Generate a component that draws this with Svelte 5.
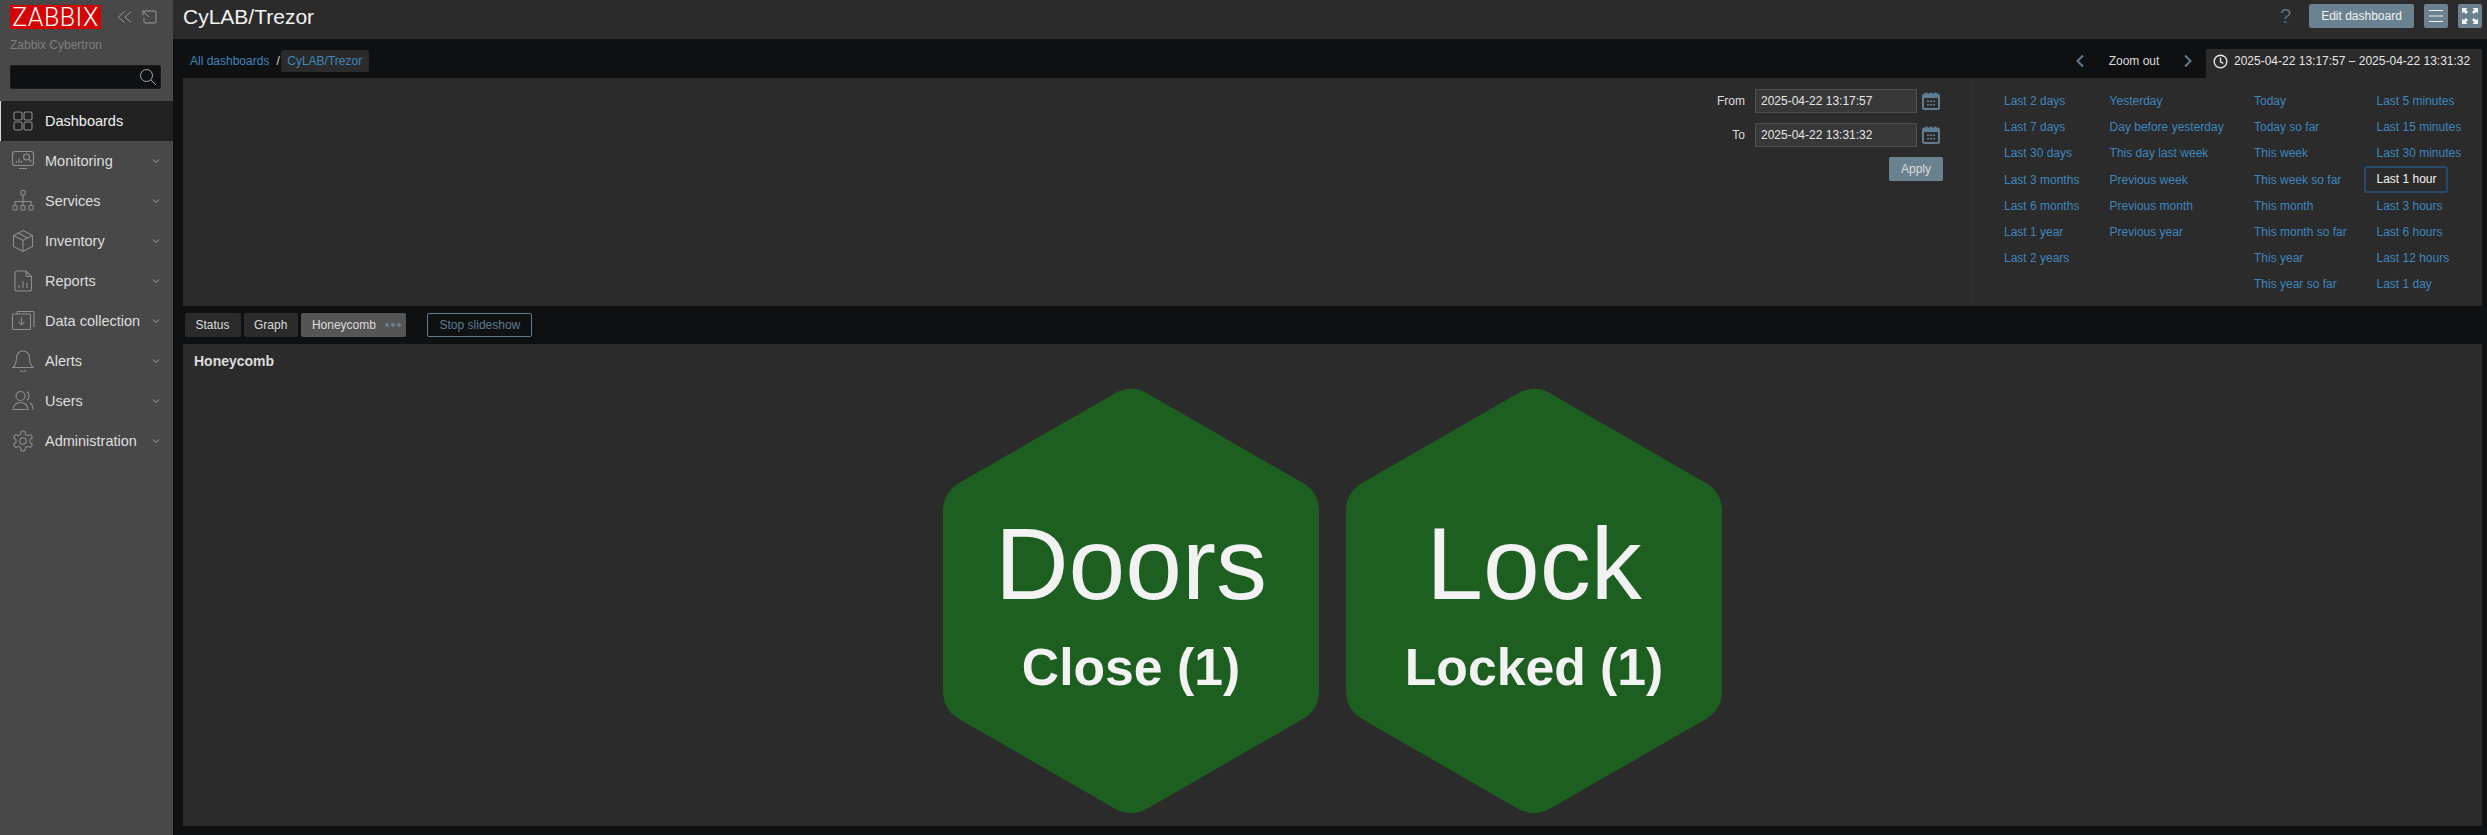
<script>
  const nav = [
    { label: 'Dashboards', active: true, icon: '<rect x="3" y="3" width="8" height="8" rx="1.5"/><rect x="13" y="3" width="8" height="8" rx="1.5"/><rect x="3" y="13" width="8" height="8" rx="1.5"/><rect x="13" y="13" width="8" height="8" rx="1.5"/>' },
    { label: 'Monitoring', icon: '<rect x="1.5" y="2.5" width="21" height="14" rx="2.5"/><path d="M8 19.5h8M5.5 12v2M8 9.5V14M10.5 11.5V14"/><circle cx="15.5" cy="8" r="3"/><path d="M17.8 10.2L20.5 13"/>' },
    { label: 'Services', icon: '<rect x="10" y="1.5" width="4" height="4.5" rx=".8"/><path d="M12 6v10M4 16v-3.5h16V16"/><rect x="2" y="16.5" width="4" height="4.5" rx=".8"/><rect x="10" y="16.5" width="4" height="4.5" rx=".8"/><rect x="18" y="16.5" width="4" height="4.5" rx=".8"/>' },
    { label: 'Inventory', icon: '<path d="M12 1.5L21.5 6.5V17.5L12 22.5L2.5 17.5V6.5Z"/><path d="M2.5 6.5L12 11.5L21.5 6.5M12 11.5V22.5M7 4L16.5 9"/>' },
    { label: 'Reports', icon: '<path d="M6 2h9l5.5 5.5V20a2 2 0 0 1-2 2H6a2 2 0 0 1-2-2V4a2 2 0 0 1 2-2Z"/><path d="M15 2v3.5a2 2 0 0 0 2 2h3.5M8 16v3M12 12v7M16 14v5"/>' },
    { label: 'Data collection', icon: '<rect x="1.5" y="5" width="18" height="15.5" rx="1"/><path d="M6 5V3.500a1 1 0 0 1 1-1h15a1 1 0 0 1 1 1V18M10.500 8.500V15.500M7.500 12.800l3 3 3-3"/>' },
    { label: 'Alerts', icon: '<path d="M12 2a6.500 6.500 0 0 0-6.500 6.500c0 5.500-1.500 8-3.500 10h20c-2-2-3.500-4.500-3.500-10A6.500 6.500 0 0 0 12 2Z"/><path d="M9 21.500c1.500 1 4.500 1 6 0"/>' },
    { label: 'Users', icon: '<circle cx="9.500" cy="7" r="4.500"/><path d="M2 20.500c0-4 3-7 7.500-7s7.500 3 7.500 7ZM16 2.800c2.500 1 2.500 7 0 8.500M19 14c2 1 3 3.500 3 6.500"/>' },
    { label: 'Administration', icon: '<path d="M12.220 2h-.440a2 2 0 0 0-2 2v.180a2 2 0 0 1-1 1.730l-.430.250a2 2 0 0 1-2 0l-.150-.080a2 2 0 0 0-2.730.730l-.220.380a2 2 0 0 0 .730 2.730l.150.100a2 2 0 0 1 1 1.720v.510a2 2 0 0 1-1 1.740l-.150.090a2 2 0 0 0-.730 2.730l.220.380a2 2 0 0 0 2.730.730l.150-.080a2 2 0 0 1 2 0l.430.250a2 2 0 0 1 1 1.730V20a2 2 0 0 0 2 2h.440a2 2 0 0 0 2-2v-.180a2 2 0 0 1 1-1.730l.430-.250a2 2 0 0 1 2 0l.150.080a2 2 0 0 0 2.730-.730l.220-.390a2 2 0 0 0-.730-2.730l-.150-.080a2 2 0 0 1-1-1.740v-.500a2 2 0 0 1 1-1.740l.150-.090a2 2 0 0 0 .730-2.730l-.220-.380a2 2 0 0 0-2.730-.730l-.150.080a2 2 0 0 1-2 0l-.430-.250a2 2 0 0 1-1-1.730V4a2 2 0 0 0-2-2z"/><circle cx="12" cy="12" r="3.200"/>' }
  ]

  const ranges = [
    ['Last 2 days', 'Last 7 days', 'Last 30 days', 'Last 3 months', 'Last 6 months', 'Last 1 year', 'Last 2 years'],
    ['Yesterday', 'Day before yesterday', 'This day last week', 'Previous week', 'Previous month', 'Previous year'],
    ['Today', 'Today so far', 'This week', 'This week so far', 'This month', 'This month so far', 'This year', 'This year so far'],
    ['Last 5 minutes', 'Last 15 minutes', 'Last 30 minutes', 'Last 1 hour', 'Last 3 hours', 'Last 6 hours', 'Last 12 hours', 'Last 1 day']
  ]

  const fields = [
    { label: 'From', value: '2025-04-22 13:17:57' },
    { label: 'To', value: '2025-04-22 13:31:32' }
  ]

  const cells = [
    { name: 'Doors', value: 'Close (1)' },
    { name: 'Lock', value: 'Locked (1)' }
  ]
</script>

<div class="page">
  <aside class="sidebar">
    <div class="brand">
      <div class="logo">ZABBIX</div>
      <div class="brand-tools">
        <svg width="16" height="16" viewBox="0 0 16 16"><path d="M7.500 2.500L1.500 8l6 5.500M14 2.500L8 8l6 5.500" /></svg>
        <svg width="16" height="16" viewBox="0 0 16 16"><path d="M6 2h8a1 1 0 0 1 1 1v10a1 1 0 0 1-1 1H4a1 1 0 0 1-1-1V9M2 2l6 6M2 6V2h4" /></svg>
      </div>
    </div>
    <div class="server">Zabbix Cybertron</div>
    <div class="search">
      <svg width="18" height="18" viewBox="0 0 18 18"><circle cx="7.500" cy="7.500" r="6" /><path d="M12 12l5 5" /></svg>
    </div>
    <nav class="menu">
      {#each nav as item}
        <div class="menu-item" class:active={item.active}>
          <svg class="menu-icon" width="24" height="24" viewBox="0 0 24 24">{@html item.icon}</svg>
          <span class="menu-label">{item.label}</span>
          {#if !item.active}
            <svg class="chev" width="8" height="6" viewBox="0 0 8 6"><path d="M1 1.500l3 3 3-3" /></svg>
          {/if}
        </div>
      {/each}
    </nav>
  </aside>

  <main class="main">
    <header class="topbar">
      <h1>CyLAB/Trezor</h1>
      <div class="actions">
        <span class="help">?</span>
        <button class="btn edit">Edit dashboard</button>
        <button class="btn square" aria-label="Menu">
          <svg width="16" height="14" viewBox="0 0 16 14"><path d="M1 1.500h14M1 7h14M1 12.500h14" /></svg>
        </button>
        <button class="btn square" aria-label="Fullscreen">
          <svg width="18" height="18" viewBox="0 0 18 18"><path class="solid" d="M1 1h5.500L4.800 2.700 7 5 5 7 2.700 4.800 1 6.500ZM17 1v5.500l-1.700-1.700L13 7l-2-2 2.200-2.300L11.500 1ZM1 17v-5.500l1.700 1.700L5 11l2 2-2.200 2.300L6.500 17ZM17 17h-5.500l1.700-1.700L11 13l2-2 2.300 2.200 1.700-1.700Z" /></svg>
        </button>
      </div>
    </header>

    <div class="crumbs">
      <div class="crumb-list">
        <span class="link">All dashboards</span>
        <span class="sep">/</span>
        <span class="link chip">CyLAB/Trezor</span>
      </div>
      <div class="time-nav">
        <svg class="arrow" width="10" height="14" viewBox="0 0 10 14"><path d="M8 1.500L2.500 7 8 12.500" /></svg>
        <span class="zoom-out">Zoom out</span>
        <svg class="arrow" width="10" height="14" viewBox="0 0 10 14"><path d="M2 1.500L7.500 7 2 12.500" /></svg>
      </div>
      <div class="time-tab">
        <svg width="15" height="15" viewBox="0 0 15 15"><circle cx="7.500" cy="7.500" r="6.300" /><path d="M7.500 3.500v4.300l2.800 1.500" /></svg>
        <span>2025-04-22 13:17:57 – 2025-04-22 13:31:32</span>
      </div>
    </div>

    <section class="filter">
      <div class="time-form">
        {#each fields as field}
          <div class="field">
            <span class="field-label">{field.label}</span>
            <div class="input">{field.value}</div>
            <svg class="calendar" width="18" height="18" viewBox="0 0 18 18">
              <rect x="1" y="2.500" width="16" height="14.500" rx="1.500" />
              <path class="band" d="M1 3h16v3H1z" />
              <path d="M4.500 .500v3M9 .500v3M13.500 .500v3" />
              <path class="dots" d="M5 8.500h2v1.500H5zM8 8.500h2v1.500H8zM11 8.500h2v1.500h-2zM5 12h2v1.500H5zM8 12h2v1.500H8zM11 12h2v1.500h-2z" />
            </svg>
          </div>
        {/each}
        <button class="btn apply">Apply</button>
      </div>
      <div class="ranges">
        {#each ranges as column, i}
          <ul class="range-col" style="width: {[105.6, 144.4, 122.5, 105.5][i]}px">
            {#each column as range}
              <li><span class="link" class:selected={range === 'Last 1 hour'}>{range}</span></li>
            {/each}
          </ul>
        {/each}
      </div>
    </section>

    <div class="tabs">
      <button class="tab">Status</button>
      <button class="tab">Graph</button>
      <button class="tab current">Honeycomb <i class="dots-more"><b></b><b></b><b></b></i></button>
      <button class="stop">Stop slideshow</button>
    </div>

    <section class="widget">
      <div class="widget-title">Honeycomb</div>
      <div class="honeycomb">
        {#each cells as cell}
          <div class="cell">
            <svg class="hex" width="376" height="424" viewBox="0 0 376 424"><path d="M172 4.200Q188 -4.500 204 4.200L360 94Q376 103.500 376 122L376 302Q376 320.500 360 330L204 419.800Q188 428.500 172 419.800L16 330Q0 320.500 0 302L0 122Q0 103.500 16 94Z" /></svg>
            <div class="cell-name">{cell.name}</div>
            <div class="cell-value">{cell.value}</div>
          </div>
        {/each}
      </div>
    </section>
  </main>
</div>

<style>
  :global(body) {
    margin: 0;
    background: #0e1012;
    font-family: "Liberation Sans", Arial, sans-serif;
    font-size: 12px;
    color: #f2f2f2;
  }

  svg {
    fill: none;
    stroke: currentColor;
    stroke-width: 1;
    display: block;
  }

  .page {
    display: flex;
    width: 2487px;
    height: 835px;
    overflow: hidden;
  }

  /* sidebar */
  .sidebar {
    width: 173px;
    flex: none;
    background: #484848;
    color: #8f8f8f;
  }

  .brand {
    display: flex;
    align-items: center;
    padding: 5px 0 0 10px;
    height: 24px;
  }

  .logo {
    width: 91px;
    height: 24px;
    background: #d40000;
    color: #fff;
    font-family: Roboto, "Liberation Sans", sans-serif;
    font-weight: 300;
    font-size: 25px;
    line-height: 25px;
    letter-spacing: .5px;
    text-align: center;
  }

  .brand-tools {
    display: flex;
    gap: 8px;
    margin-left: 16px;
    color: #9a9a9a;
  }

  .server {
    margin: 8px 0 0 10px;
    color: #7f7f7f;
    font-size: 12px;
    line-height: 16px;
  }

  .search {
    display: flex;
    align-items: center;
    justify-content: flex-end;
    box-sizing: border-box;
    width: 151px;
    height: 24px;
    margin: 12px 0 12px 10px;
    padding-right: 3px;
    background: #0e1012;
    border: 1px solid #1c1c1c;
    border-radius: 2px;
    color: #a8a8a8;
  }

  .menu-item {
    display: flex;
    align-items: center;
    height: 40px;
    padding-left: 11px;
    color: #dedede;
    font-size: 14.500px;
  }

  .menu-item.active {
    background: #212121;
    color: #f2f2f2;
    box-shadow: inset 1px 0 0 #d8d8d8;
  }

  .menu-icon {
    flex: none;
    color: #8e8e8e;
    stroke-width: 1.100;
  }

  .menu-label {
    flex: 1;
    margin-left: 10px;
  }

  .chev {
    margin-right: 13px;
    color: #a0a0a0;
  }

  /* main */
  .main {
    flex: 1;
    min-width: 0;
  }

  .topbar {
    display: flex;
    align-items: center;
    justify-content: space-between;
    height: 39px;
    padding: 0 5px 0 10px;
    background: #2b2b2b;
  }

  h1 {
    margin: 0 0 5px;
    font-size: 21px;
    font-weight: 400;
    color: #f2f2f2;
  }

  .actions {
    display: flex;
    align-items: center;
    margin-bottom: 7px;
  }

  .help {
    margin-right: 18px;
    font-size: 20px;
    color: #5b6e7c;
  }

  .btn {
    box-sizing: border-box;
    height: 24px;
    border: none;
    border-radius: 2px;
    padding: 0;
    background: #6a8190;
    color: #f2f2f2;
    font: inherit;
  }

  .edit {
    width: 105px;
  }

  .square {
    display: flex;
    align-items: center;
    justify-content: center;
    width: 24px;
    margin-left: 10px;
  }

  .solid {
    fill: #f2f2f2;
    stroke: none;
  }

  .crumbs {
    display: flex;
    align-items: stretch;
    height: 39px;
  }

  .crumb-list {
    flex: 1;
    display: flex;
    align-items: center;
    padding: 4px 0 0 17px;
  }

  .link {
    color: #3f86bd;
  }

  .sep {
    margin: 0 1px 0 7px;
    color: #dcdcdc;
  }

  .chip {
    padding: 5px 6.500px;
    background: #2b2b2b;
    border-radius: 2px;
    line-height: 12px;
  }

  .time-nav {
    display: flex;
    align-items: center;
    padding-top: 4px;
    color: #5f7c90;
  }

  .arrow {
    stroke-width: 2;
  }

  .zoom-out {
    width: 98px;
    text-align: center;
    color: #dcdcdc;
  }

  .time-tab {
    display: flex;
    align-items: center;
    gap: 6px;
    box-sizing: border-box;
    width: 276px;
    margin: 10px 5px 0 13px;
    padding: 0 0 5px 7px;
    background: #2b2b2b;
    color: #e6e6e6;
    white-space: nowrap;
  }

  .time-tab svg {
    stroke-width: 1.400;
  }

  .filter {
    display: flex;
    height: 228px;
    margin: 0 5px 0 10px;
    background: #2b2b2b;
  }

  .time-form {
    position: relative;
    width: 1790px;
    flex: none;
    display: flex;
    flex-direction: column;
    align-items: flex-end;
    gap: 10px;
    padding: 11px 30px 0 0;
    box-sizing: border-box;
  }

  .field {
    display: flex;
    align-items: center;
    height: 24px;
  }

  .field-label {
    margin-right: 10px;
    color: #dcdcdc;
  }

  .input {
    box-sizing: border-box;
    width: 162px;
    height: 24px;
    line-height: 22px;
    padding-left: 5px;
    background: #383838;
    border: 1px solid #4f4f4f;
    color: #e6e6e6;
  }

  .calendar {
    margin: 0 3px 0 5px;
    color: #5f7c90;
    stroke-width: 2;
  }

  .band {
    fill: #5f7c90;
    stroke: none;
  }

  .dots {
    fill: #5f7c90;
    stroke: none;
  }

  .apply {
    width: 54px;
    color: #dcdcdc;
  }

  .ranges {
    flex: 1;
    display: flex;
    align-items: flex-start;
    padding: 10px 0 0 30px;
    border-left: 1px solid #303030;
  }

  .range-col {
    flex: none;
    list-style: none;
    margin: 0;
    padding: 0;
  }

  .range-col li {
    height: 26.200px;
    line-height: 26.200px;
    white-space: nowrap;
  }

  .selected {
    display: inline-block;
    vertical-align: top;
    box-sizing: border-box;
    height: 27px;
    line-height: 23px;
    margin: -1px 0 0 -12px;
    padding: 0 11px 0 10px;
    border: 2px solid #274a6b;
    border-radius: 3px;
    color: #f2f2f2;
    width: 84px;
  }

  /* tabs */
  .tabs {
    display: flex;
    align-items: center;
    height: 38px;
    padding-left: 12px;
    gap: 3px;
  }

  .tab {
    height: 24px;
    padding: 0 11px 0 10.500px;
    border: none;
    border-radius: 2px;
    background: #2b2b2b;
    color: #dcdcdc;
    font: inherit;
  }

  .tab.current {
    display: flex;
    align-items: center;
    width: 105px;
    background: #555;
  }

  .dots-more {
    display: flex;
    gap: 2px;
    margin-left: 9px;
  }

  .dots-more b {
    width: 4px;
    height: 4px;
    border-radius: 50%;
    background: #6a8190;
  }

  .stop {
    box-sizing: border-box;
    width: 105px;
    height: 24px;
    margin-left: 18px;
    border: 1px solid #5f7c8c;
    border-radius: 2px;
    background: none;
    color: #5f7c90;
    font: inherit;
  }

  /* widget */
  .widget {
    height: 482px;
    margin: 0 5px 0 10px;
    background: #2b2b2b;
  }

  .widget-title {
    height: 31px;
    padding: 1px 0 0 11px;
    line-height: 32px;
    font-size: 14px;
    font-weight: 700;
    color: #dcdcdc;
  }

  .honeycomb {
    display: flex;
    justify-content: center;
    gap: 27px;
    padding-top: 13px;
  }

  .cell {
    position: relative;
    width: 376px;
    height: 424px;
    display: flex;
    flex-direction: column;
    align-items: center;
    padding-top: 123.500px;
    box-sizing: border-box;
    color: #f2f2f2;
  }

  .hex {
    position: absolute;
    inset: 0;
    overflow: visible;
    stroke: none;
  }

  .hex path {
    fill: #1d5e21;
  }

  .cell-name,
  .cell-value {
    position: relative;
    white-space: nowrap;
  }

  .cell-name {
    font-size: 102px;
    line-height: 102px;
  }

  .cell-value {
    margin-top: 26.500px;
    font-size: 51.700px;
    line-height: 52px;
    font-weight: 700;
  }
</style>
